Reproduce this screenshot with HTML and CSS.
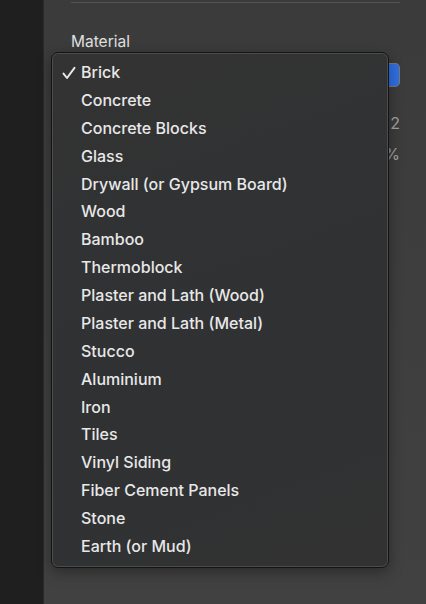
FILE: index.html
```html
<!DOCTYPE html>
<html lang="en">
<head>
    <meta charset="UTF-8">
    <meta name="viewport" content="width=device-width, initial-scale=1.0">
    <title>Material</title>
    <link rel="stylesheet" href="styles.css">
</head>
<body>
    <div class="sidebar"></div>
    <div class="panel">
        <div class="divider"></div>
        <div class="label">Material</div>
        <div class="popup-row">
            <div class="popup"><span class="stepper"></span></div>
        </div>
        <div class="value">2</div>
        <div class="value">%</div>

        <ul class="menu">
            <li><svg class="check" width="14" height="14" viewBox="0 0 14 14"><path d="M1.5 7.6 L5 12 L12.5 1.8" fill="none" stroke="#e8e8e8" stroke-width="2" stroke-linecap="round" stroke-linejoin="round"/></svg>Brick</li>
            <li>Concrete</li>
            <li>Concrete Blocks</li>
            <li>Glass</li>
            <li>Drywall (or Gypsum Board)</li>
            <li>Wood</li>
            <li>Bamboo</li>
            <li>Thermoblock</li>
            <li>Plaster and Lath (Wood)</li>
            <li>Plaster and Lath (Metal)</li>
            <li>Stucco</li>
            <li>Aluminium</li>
            <li>Iron</li>
            <li>Tiles</li>
            <li>Vinyl Siding</li>
            <li>Fiber Cement Panels</li>
            <li>Stone</li>
            <li>Earth (or Mud)</li>
        </ul>
    </div>
</body>
</html>
```

FILE: styles.css
```css
*{
    margin: 0;
    padding: 0;
    box-sizing: border-box;
}
body{
    display: flex;
    width: 426px;
    height: 604px;
    overflow: hidden;
    background-color: #3c3c3c;
    font-family: Inter, "Open Sans", sans-serif;
    font-size: 15px;
    color: #e4e4e4;
}
.sidebar{
    width: 44px;
    flex: none;
    background-color: #1f1f1f;
    border-right: 1px solid #2a2a2a;
}
.panel{
    position: relative;
    flex: 1;
    padding: 2px 26px 0 27px;
    background: linear-gradient(180deg, #3b3b3b, #414141);
}
.divider{
    height: 1px;
    background-color: #535353;
}
.label{
    margin-top: 30px;
    line-height: 18px;
    font-size: 15.5px;
    color: #e0e0e0;
}
.popup-row{
    margin-top: 12px;
    height: 24px;
}
.popup{
    height: 24px;
    display: flex;
    justify-content: flex-end;
}
.stepper{
    width: 12px;
    height: 24px;
    border-radius: 0 5px 5px 0;
    background-color: #2f6fe0;
    border: 1px solid #7a7a7a;
    border-left: none;
}
.value{
    text-align: right;
    color: #a2a2a2;
    font-size: 16px;
    line-height: 20px;
    margin-top: 26px;
}
.value + .value{
    margin-top: 11px;
}
.menu{
    position: absolute;
    left: 7px;
    top: 52px;
    width: 338px;
    list-style: none;
    padding: 6px 0;
    border-radius: 7px;
    background: linear-gradient(160deg, #333333, #2f3133 60%, #323232);
    border: 1px solid #141414;
    box-shadow: inset 0 0 0 1px #4c4c4c, 0 4px 14px rgba(0, 0, 0, 0.35);
}
.menu li{
    position: relative;
    height: 27.88px;
    line-height: 27.88px;
    padding-left: 29px;
    font-size: 16px;
    font-weight: 500;
    color: #e8e8e8;
}
.check{
    position: absolute;
    left: 10px;
    top: 7px;
}
```
